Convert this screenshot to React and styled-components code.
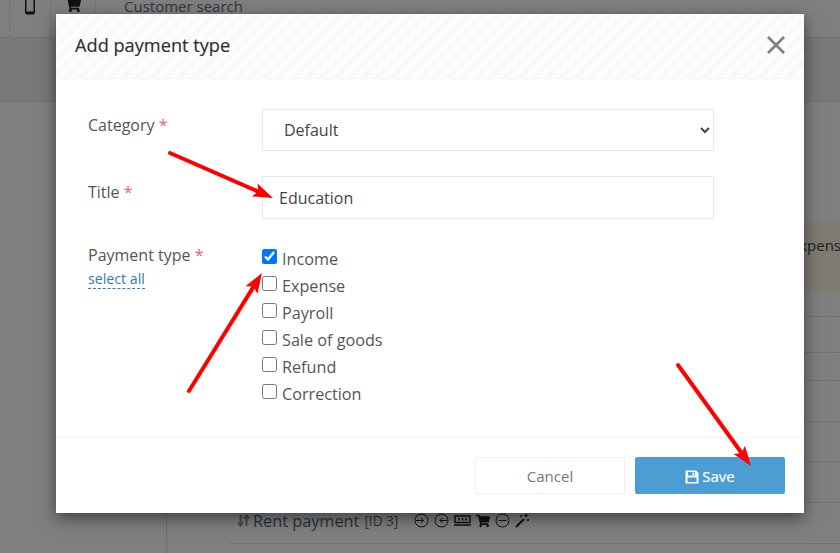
import React from 'react';
import styled, { createGlobalStyle } from 'styled-components';
import { FaShoppingCart } from 'react-icons/fa';

const Global = createGlobalStyle`
  html, body { margin: 0; padding: 0; width: 840px; height: 553px; overflow: hidden; background: #fff; }
  body { font-family: "Open Sans", "Noto Sans", sans-serif; color: #333; }
  * { box-sizing: border-box; }
`;

const Page = styled.div`
  position: relative;
  width: 840px;
  height: 553px;
  overflow: hidden;
  display: flex;
  flex-direction: column;
  background: #fff;
`;
const TopBar = styled.div`
  height: 38px;
  flex: none;
  display: flex;
  align-items: flex-start;
  padding-left: 9px;
  border-bottom: 1px solid #e4e4e4;
`;
const TopCell = styled.div`
  width: ${p => p.$w}px;
  height: 37px;
  border-left: 1px dashed #e0e0e0;
  overflow: hidden;
  display: flex;
  justify-content: center;
  color: #222;
  svg { margin-top: ${p => p.$t}px; flex: none; }
`;
const SearchLabel = styled.div`
  margin-left: 28px;
  margin-top: -4px;
  font-size: 15px;
  line-height: 20px;
  color: #5f7080;
`;
const Band = styled.div`
  height: 64px;
  flex: none;
  background: #f0f0f0;
  border-bottom: 1px solid #e4e4e4;
`;
const Body = styled.div`
  flex: 1;
  display: grid;
  grid-template-columns: 167px 1fr;
`;
const Side = styled.div`
  border-right: 1px solid #dcdcdc;
`;
const Main = styled.div`
  display: flex;
  flex-direction: column;
  padding-top: 120px;
  min-width: 0;
`;
const Alert = styled.div`
  height: 70px;
  background: #fcf8e3;
  display: flex;
  justify-content: flex-end;
  align-items: flex-start;
  padding-top: 12px;
  font-size: 15px;
  line-height: 22px;
  color: #444;
  overflow: hidden;
  white-space: nowrap;
  span { margin-right: -1px; }
`;
const TableRows = styled.div`
  display: flex;
  flex-direction: column;
  padding-left: 63px;
`;
const TableRow = styled.div`
  height: ${p => p.$h}px;
  flex: none;
  border-bottom: 1px solid #e2e2e2;
  display: flex;
  align-items: center;
  padding: 0 0 5px 7px;
  font-size: 16.3px;
  color: #4f6578;
  white-space: nowrap;
`;
const SortIcon = styled.svg`
  width: 13px;
  height: 13px;
  margin-right: 3px;
  flex: none;
`;
const RowId = styled.span`
  font-size: 13.6px;
  color: #666;
  margin-left: 5px;
  margin-right: 16px;
`;
const RowIcons = styled.span`
  display: inline-flex;
  align-items: center;
  gap: 5px;
  color: #222;
`;

const Overlay = styled.div`
  position: absolute;
  inset: 0;
  background: rgba(0, 0, 0, 0.5);
`;
const Modal = styled.div`
  position: absolute;
  left: 56px;
  top: 14px;
  width: 748px;
  height: 499px;
  background: #fff;
  box-shadow: 0 5px 15px rgba(0, 0, 0, 0.5);
  display: flex;
  flex-direction: column;
`;
const ModalHeader = styled.div`
  height: 65px;
  flex: none;
  display: flex;
  align-items: center;
  justify-content: space-between;
  padding: 0 19px;
  border-bottom: 1px solid #f4f4f4;
  background-color: #fff;
  background-image: repeating-linear-gradient(135deg, #f9f9f9 0 5px, #fdfdfd 5px 10px);
`;
const ModalTitle = styled.h4`
  margin: 0 0 2px;
  font-size: 18.2px;
  font-weight: 400;
  line-height: 24px;
  color: #2b2e33;
  -webkit-text-stroke: 0.15px #2b2e33;
`;
const CloseBtn = styled.button`
  border: 0;
  background: none;
  padding: 0;
  margin-bottom: 3px;
  width: 18px;
  height: 18px;
  color: #808080;
  display: flex;
`;
const ModalBody = styled.div`
  flex: 1;
  padding: 30px 32px 0;
  display: flex;
  flex-direction: column;
`;
const Row = styled.div`
  display: grid;
  grid-template-columns: 174px 452px;
  margin-bottom: ${p => p.$mb}px;
`;
const Label = styled.div`
  font-size: 16px;
  line-height: 20px;
  color: #555;
  padding-top: ${p => p.$pt}px;
`;
const Req = styled.span`
  color: #f0616e;
`;
const SelectAll = styled.a`
  display: table;
  font-size: 14.2px;
  color: #337ab7;
  border-bottom: 1px dashed #337ab7;
  margin-top: 6px;
  height: 18px;
  line-height: 16px;
`;
const Select = styled.select`
  width: 452px;
  height: 42px;
  border: 1px solid #e8e8e8;
  background: #fff;
  font: 400 16px "Open Sans", sans-serif;
  color: #444;
  padding-left: 17px;
  border-radius: 0;
  outline: none;
`;
const Input = styled.input`
  width: 452px;
  height: 43px;
  border: 1px solid #e8e8e8;
  background: #fff;
  font: 400 16px "Open Sans", sans-serif;
  color: #444;
  padding: 0 16px;
  outline: none;
`;
const Checks = styled.div`
  display: flex;
  flex-direction: column;
  padding-top: 3px;
`;
const CheckRow = styled.label`
  height: 27px;
  display: flex;
  align-items: center;
  font-size: 16.2px;
  color: #555;
`;
const Check = styled.input`
  width: 15px;
  height: 15px;
  margin: 0 5px 4px 0;
  accent-color: #0075ff;
`;
const Footer = styled.div`
  height: 76px;
  flex: none;
  border-top: 1px solid #f4f4f4;
  display: flex;
  justify-content: flex-end;
  align-items: flex-start;
  gap: 10px;
  padding: 19px 19px 0 0;
`;
const Button = styled.button`
  width: 150px;
  height: 37px;
  border-radius: 2px;
  font: 400 15px "Open Sans", sans-serif;
  display: flex;
  align-items: center;
  justify-content: center;
  gap: 3px;
  border: 1px solid ${p => (p.$primary ? '#4b9dd3' : '#eeeeee')};
  background: ${p => (p.$primary ? '#4b9dd3' : '#fff')};
  color: ${p => (p.$primary ? '#fff' : '#777')};
  -webkit-text-stroke: ${p => (p.$primary ? '0.2px #fff' : '0')};
`;
const SaveIcon = styled.svg`
  width: 14px;
  height: 14px;
  flex: none;
  margin-top: 2px;
`;
const ArrowLayer = styled.svg`
  position: absolute;
  left: 0;
  top: 0;
  width: 840px;
  height: 553px;
  pointer-events: none;
`;

const Arrow = ({ x1, y1, x2, y2 }) => {
  const a = Math.atan2(y2 - y1, x2 - x1);
  const len = 20, w = 7;
  const bx = x2 - len * Math.cos(a), by = y2 - len * Math.sin(a);
  const nx = -Math.sin(a), ny = Math.cos(a);
  const notch = 16;
  const sx = x2 - notch * Math.cos(a), sy = y2 - notch * Math.sin(a);
  return (
    <g>
      <line x1={x1} y1={y1} x2={sx} y2={sy} stroke="#fe0000" strokeWidth="4" strokeLinecap="round" />
      <polygon fill="#fe0000" points={`${x2},${y2} ${bx + nx * w},${by + ny * w} ${sx},${sy} ${bx - nx * w},${by - ny * w}`} />
    </g>
  );
};

const types = ['Income', 'Expense', 'Payroll', 'Sale of goods', 'Refund', 'Correction'];

export default function App() {
  return (
    <Page>
      <Global />
      <TopBar>
        <TopCell $w={41} $t={-5}>
          <svg width="10" height="20" viewBox="0 0 10 20" fill="none">
            <rect x="0.75" y="0.75" width="8.5" height="18" rx="1.5" stroke="#222" strokeWidth="1.5" />
            <rect x="1" y="16.5" width="8" height="2.500" fill="#222" />
          </svg>
        </TopCell>
        <TopCell $w={45} $t={-3}><FaShoppingCart size={16} /></TopCell>
        <TopCell $w={1} $t={0} />
        <SearchLabel>Customer search</SearchLabel>
      </TopBar>
      <Band />
      <Body>
        <Side />
        <Main>
          <Alert><span>xpens</span></Alert>
          <TableRows>
            <TableRow $h={25} />
            <TableRow $h={36} />
            <TableRow $h={28} />
            <TableRow $h={41} />
            <TableRow $h={40} />
            <TableRow $h={41} />
            <TableRow $h={41}>
              <SortIcon viewBox="0 0 13 13" fill="none" stroke="#999" strokeWidth="2">
                <path d="M3.500 1v10M1 8.500l2.500 3 2.500-3" />
                <path d="M9.500 12V2M7 4.500l2.500-3 2.500 3" />
              </SortIcon>
              <span>Rent payment</span>
              <RowId>[ID 3]</RowId>
              <RowIcons>
                <svg width="15" height="15" viewBox="0 0 15 15" fill="none" stroke="#222"><circle cx="7.500" cy="7.500" r="6.500" /><path d="M2 7.500h7M7 5l2.500 2.500L7 10" /></svg>
                <svg width="15" height="15" viewBox="0 0 15 15" fill="none" stroke="#222"><circle cx="7.500" cy="7.500" r="6.500" /><path d="M13 7.500H6M8.500 5L6 7.500 8.500 10" /></svg>
                <svg width="17" height="11" viewBox="0 0 17 11" fill="none" stroke="#222" strokeWidth="1.500"><rect x="1" y="1" width="15" height="6.500" /><path d="M5 3v2.500M8.500 3v2.500M12 3v2.500" /><path d="M0 10h17" /></svg>
                <FaShoppingCart size={14} />
                <svg width="15" height="15" viewBox="0 0 15 15" fill="none" stroke="#222"><circle cx="7.500" cy="7.500" r="6.500" /><path d="M3.500 7.500h8" /></svg>
                <svg width="15" height="15" viewBox="0 0 15 15" fill="none" stroke="#222" strokeWidth="1.400"><path d="M1 14l8-8" strokeWidth="2" /><path d="M11 1v3M9.500 2.500h3M13 6v2M12 7h2M6 2v2" /></svg>
              </RowIcons>
            </TableRow>
            <TableRow $h={41} />
          </TableRows>
        </Main>
      </Body>
      <Overlay />
      <Modal>
        <ModalHeader>
          <ModalTitle>Add payment type</ModalTitle>
          <CloseBtn>
            <svg width="18" height="18" viewBox="0 0 18 18" stroke="currentColor" strokeWidth="2.600" fill="none"><path d="M1 1l16 16M17 1L1 17" /></svg>
          </CloseBtn>
        </ModalHeader>
        <ModalBody>
          <Row $mb={25}>
            <Label $pt={6}>Category <Req>*</Req></Label>
            <Select defaultValue="Default"><option>Default</option></Select>
          </Row>
          <Row $mb={23}>
            <Label $pt={6}>Title <Req>*</Req></Label>
            <Input defaultValue="Education" />
          </Row>
          <Row $mb={0}>
            <div>
              <Label $pt={3}>Payment type <Req>*</Req></Label>
              <SelectAll>select all</SelectAll>
            </div>
            <Checks>
              {types.map((t, i) => (
                <CheckRow key={t}><Check type="checkbox" defaultChecked={i === 0} />{t}</CheckRow>
              ))}
            </Checks>
          </Row>
        </ModalBody>
        <Footer>
          <Button>Cancel</Button>
          <Button $primary>
            <SaveIcon viewBox="0 0 14 14">
              <path fill="#fff" fillRule="evenodd" d="M0.500 0.500H11L13.500 3V13.500H0.500ZM3 2V5.500H10V2ZM7.500 2.500H9.200V5H7.500ZM2.500 7.500V12H11.500V7.500Z" />
            </SaveIcon>
            Save
          </Button>
        </Footer>
      </Modal>
      <ArrowLayer viewBox="0 0 840 553">
        <Arrow x1={170} y1={153} x2={273} y2={198} />
        <Arrow x1={189} y1={391} x2={262} y2={273} />
        <Arrow x1={678} y1={365} x2={751} y2={466} />
      </ArrowLayer>
    </Page>
  );
}
